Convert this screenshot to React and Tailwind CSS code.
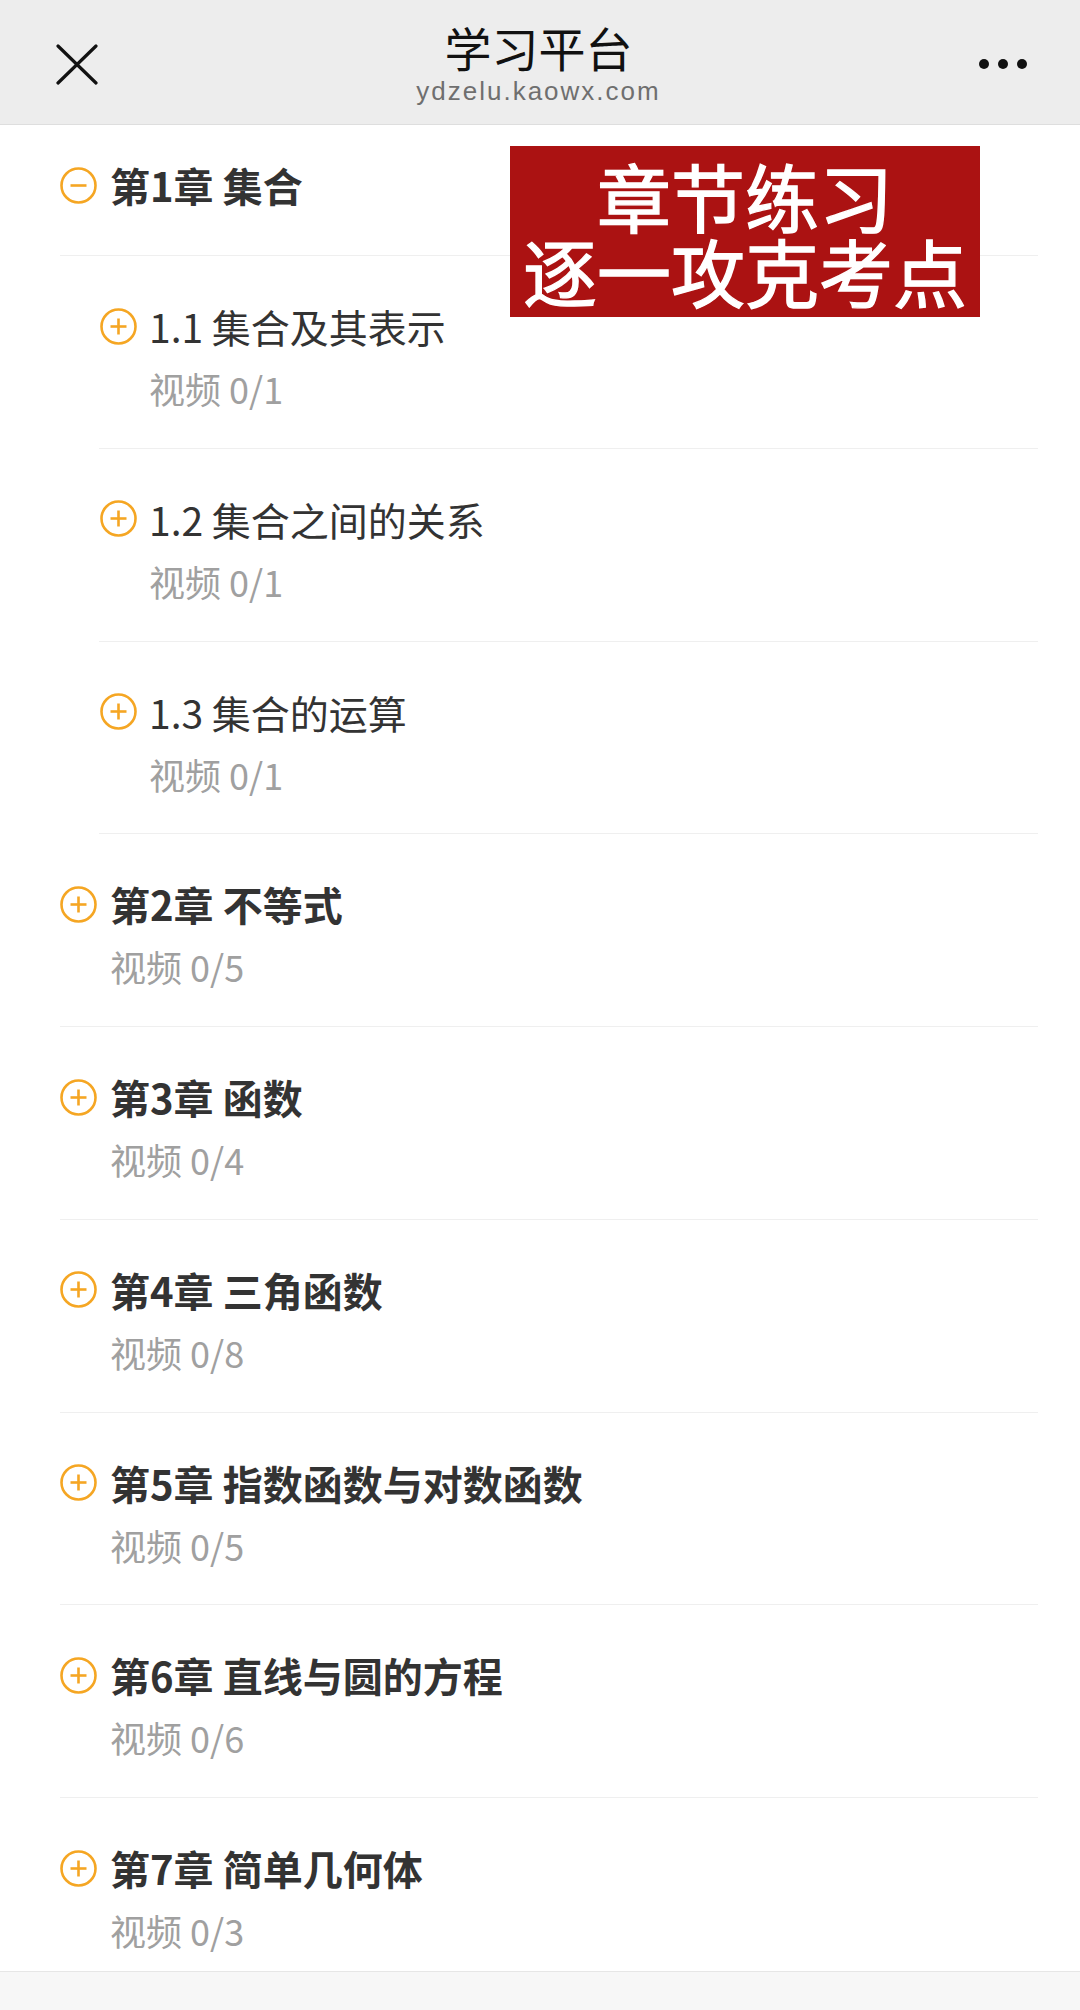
import React from 'react';

const chapters = [
  { title: '第2章 不等式', count: '0/5' },
  { title: '第3章 函数', count: '0/4' },
  { title: '第4章 三角函数', count: '0/8' },
  { title: '第5章 指数函数与对数函数', count: '0/5' },
  { title: '第6章 直线与圆的方程', count: '0/6' },
];

const sections = [
  { title: '1.1 集合及其表示', count: '0/1' },
  { title: '1.2 集合之间的关系', count: '0/1' },
  { title: '1.3 集合的运算', count: '0/1' },
];

function Toggle({ open }) {
  return (
    <svg width="37" height="37" viewBox="0 0 37 37" className="shrink-0">
      <circle cx="18.5" cy="18.5" r="17" fill="none" stroke="#f5a623" strokeWidth="2.6" />
      <line x1="10.5" y1="18.5" x2="26.5" y2="18.5" stroke="#f5a623" strokeWidth="2.6" />
      {!open && <line x1="18.5" y1="10.5" x2="18.5" y2="26.5" stroke="#f5a623" strokeWidth="2.6" />}
    </svg>
  );
}

function Row({ title, count, bold, last, indent }) {
  return (
    <div
      className={`${indent ? 'ml-[99px]' : 'ml-[60px]'} mr-[42px] pt-[42px] ${
        last ? 'h-[173px]' : 'h-[192.75px] border-b border-[#efefef]'
      }`}
    >
      <div className={`flex items-center ${indent ? 'gap-[12px] pl-[1px]' : 'gap-[13px]'} h-[56px]`}>
        <Toggle />
        <span
          className={`leading-[56px] text-[#333333] ${bold ? 'text-[40px] font-bold' : 'text-[39px]'}`}
        >
          {title}
        </span>
      </div>
      <div className="pl-[50px] mt-[14px] text-[36px] leading-[40px] text-[#a0a0a0]">视频 {count}</div>
    </div>
  );
}

export default function App() {
  return (
    <div className="relative flex flex-col min-h-[2010px] w-[1080px] bg-white font-['Noto_Sans_CJK_SC','Liberation_Sans',sans-serif]">
      <header className="h-[125px] shrink-0 bg-[#ededed] border-b border-[#dedede] flex items-start justify-between px-[56px]">
        <svg width="42" height="42" viewBox="0 0 42 42" className="mt-[44px]">
          <line x1="2" y1="2" x2="40" y2="39" stroke="#111" strokeWidth="3.2" strokeLinecap="round" />
          <line x1="40" y1="2" x2="2" y2="39" stroke="#111" strokeWidth="3.2" strokeLinecap="round" />
        </svg>
        <div className="flex flex-col items-center pt-[20px]">
          <div className="text-[47px] leading-[54px] text-[#111111]">学习平台</div>
          <div className="text-[26px] leading-[34px] tracking-[2px] text-[#6f6f6f] font-['Liberation_Sans',sans-serif]">
            ydzelu.kaowx.com
          </div>
        </div>
        <div className="mt-[59px] flex gap-[9px] mr-[-3px]">
          <span className="w-[10px] h-[10px] rounded-full bg-[#111]" />
          <span className="w-[10px] h-[10px] rounded-full bg-[#111]" />
          <span className="w-[10px] h-[10px] rounded-full bg-[#111]" />
        </div>
      </header>

      <div className="ml-[60px] mr-[42px] h-[131px] pt-[32px] border-b border-[#efefef]">
        <div className="flex items-center gap-[13px] h-[56px]">
          <Toggle open />
          <span className="text-[40px] leading-[56px] font-bold text-[#333333]">第1章 集合</span>
        </div>
      </div>

      {sections.map((s) => (
        <Row key={s.title} {...s} indent />
      ))}

      {chapters.map((c) => (
        <Row key={c.title} {...c} bold />
      ))}

      <Row title="第7章 简单几何体" count="0/3" bold last />

      <div className="flex-1 bg-[#f7f7f7] border-t border-[#e6e6e6]" />

      <div className="absolute left-[510px] top-[146px] w-[470px] h-[171px] bg-[#ab1212] flex flex-col items-center justify-center text-white text-[74px] leading-[75px] [-webkit-text-stroke:1.3px_white]">
        <span>章节练习</span>
        <span>逐一攻克考点</span>
      </div>
    </div>
  );
}
